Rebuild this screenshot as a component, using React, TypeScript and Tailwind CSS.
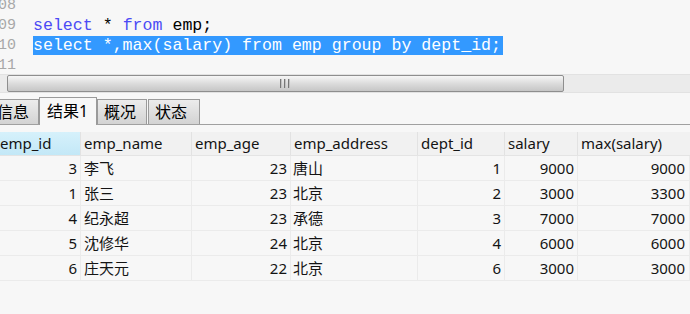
import React from 'react';

// 结果集数据
const rows = [
  { id: 3, name: '李飞', age: 23, addr: '唐山', dept: 1, salary: 9000, max: 9000 },
  { id: 1, name: '张三', age: 23, addr: '北京', dept: 2, salary: 3000, max: 3300 },
  { id: 4, name: '纪永超', age: 23, addr: '承德', dept: 3, salary: 7000, max: 7000 },
  { id: 5, name: '沈修华', age: 24, addr: '北京', dept: 4, salary: 6000, max: 6000 },
  { id: 6, name: '庄天元', age: 22, addr: '北京', dept: 6, salary: 3000, max: 3000 },
];

const cols = [
  { key: 'emp_id', w: 'w-[81px]' },
  { key: 'emp_name', w: 'w-[111px]' },
  { key: 'emp_age', w: 'w-[99px]' },
  { key: 'emp_address', w: 'w-[127px]' },
  { key: 'dept_id', w: 'w-[87px]' },
  { key: 'salary', w: 'w-[73px]' },
  { key: 'max(salary)', w: 'w-[120px]' },
];

const mono = "font-['Liberation_Mono','Courier_New',monospace]";
const ui = "font-['Noto_Sans','Noto_Sans_CJK_SC',sans-serif]";

const Kw = ({ children }: { children: React.ReactNode }) => (
  <span className="text-[#4b4bf5]">{children}</span>
);

const Tab = ({ label, active, className }: { label: string; active?: boolean; className?: string }) =>
  active ? (
    <div className={`h-[28px] shrink-0 whitespace-nowrap self-end border border-b-0 border-[#9a9a9a] bg-[#f7f7f7] px-[7px] pt-[2px] text-[16px] leading-[22px] text-black relative top-[1px] ${className ?? ''}`}>
      {label}
    </div>
  ) : (
    <div className={`h-[25px] shrink-0 whitespace-nowrap self-end border border-b-0 border-[#9a9a9a] bg-gradient-to-b from-[#ececec] to-[#d3d3d3] px-[6px] text-[16px] leading-[24px] text-black ${className ?? ''}`}>
      {label}
    </div>
  );

export default function App() {
  return (
    <div className={`w-[690px] h-[314px] overflow-hidden bg-[#f7f7f7] ${ui}`}>
      {/* SQL 编辑器 */}
      <div className={`h-[74px] overflow-hidden ${mono} text-[16.6px] leading-[20px]`}>
        <div className="-mt-[4px] flex flex-col">
          {[
            { n: '08', code: <span>&nbsp;</span> },
            {
              n: '09',
              code: (
                <span className="text-black">
                  <Kw>select</Kw> * <Kw>from</Kw> emp;
                </span>
              ),
            },
            {
              n: '10',
              code: (
                <span className="bg-[#3399ff] text-white pr-[2px]">select *,max(salary) from emp group by dept_id;</span>
              ),
            },
            { n: '11', code: <span>&nbsp;</span> },
          ].map((l) => (
            <div key={l.n} className="flex h-[20px] items-center">
              <span className="w-[31px] -ml-[2px] text-[15px] text-[#a8a8a8] shrink-0">{l.n}</span>
              <span className="ml-[4px] whitespace-pre">{l.code}</span>
            </div>
          ))}
        </div>
      </div>

      {/* 横向滚动条 */}
      <div className="h-[19px] bg-[#ebebeb] border-y border-[#e2e2e2] flex">
        <div className="ml-[7px] w-[557px] h-full border border-[#8e8e8e] rounded-[2px] bg-gradient-to-b from-[#f6f6f6] via-[#dcdcdc] to-[#c6c6c6] flex items-center justify-center">
          <div className="flex gap-[2px] -ml-[1px]">
            <span className="w-[2px] h-[9px] bg-gradient-to-r from-[#555] to-[#e8e8e8]" />
            <span className="w-[2px] h-[9px] bg-gradient-to-r from-[#555] to-[#e8e8e8]" />
            <span className="w-[2px] h-[9px] bg-gradient-to-r from-[#555] to-[#e8e8e8]" />
          </div>
        </div>
      </div>

      {/* 结果面板标签 */}
      <div className="mt-[5px] h-[27px] flex items-end border-b border-[#a0a0a0]">
        <Tab label="信息" className="-ml-[10px] w-[49px]" />
        <Tab label="结果1" active className="w-[58px]" />
        <Tab label="概况" className="w-[50px]" />
        <Tab label="状态" className="ml-[1px] w-[52px]" />
      </div>

      {/* 结果表格 */}
      <div className="mt-[7px] text-[15px] text-[#141414]">
        <div className="flex h-[24px] border-b border-[#e4e4e4] bg-[#f1f1f1]">
          {cols.map((c, i) => (
            <div
              key={c.key}
              className={`${c.w} shrink-0 flex items-center border-r border-[#e2e2e2] ${
                i === 0 ? 'bg-gradient-to-b from-[#d6f1fb] to-[#c3e8f7] pl-0' : 'pl-[3px]'
              }`}
            >
              {c.key}
            </div>
          ))}
        </div>
        {rows.map((r) => (
          <div key={r.id} className="flex h-[25px] border-b border-[#ebebeb]">
            <div className="w-[81px] shrink-0 flex items-center justify-end pr-[3px] border-r border-[#ebebeb]">{r.id}</div>
            <div className="w-[111px] shrink-0 flex items-center pl-[3px] border-r border-[#ebebeb]">{r.name}</div>
            <div className="w-[99px] shrink-0 flex items-center justify-end pr-[3px] border-r border-[#ebebeb]">{r.age}</div>
            <div className="w-[127px] shrink-0 flex items-center pl-[2px] border-r border-[#ebebeb]">{r.addr}</div>
            <div className="w-[87px] shrink-0 flex items-center justify-end pr-[3px] border-r border-[#ebebeb]">{r.dept}</div>
            <div className="w-[73px] shrink-0 flex items-center justify-end pr-[3px] border-r border-[#ebebeb]">{r.salary}</div>
            <div className="w-[112px] shrink-0 flex items-center justify-end pr-[4px] border-r border-[#ebebeb]">{r.max}</div>
          </div>
        ))}
      </div>
    </div>
  );
}
